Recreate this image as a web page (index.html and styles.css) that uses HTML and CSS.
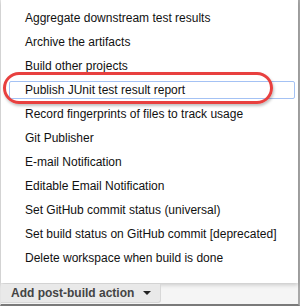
FILE: index.html
```html
<!DOCTYPE html>
<html lang="en">
<head>
    <meta charset="UTF-8">
    <title>Add post-build action</title>
    <link rel="stylesheet" href="styles.css">
</head>
<body>
    <div class="frame">
        <ul class="menu">
            <li>Aggregate downstream test results</li>
            <li>Archive the artifacts</li>
            <li>Build other projects</li>
            <li class="active">Publish JUnit test result report</li>
            <li>Record fingerprints of files to track usage</li>
            <li>Git Publisher</li>
            <li>E-mail Notification</li>
            <li>Editable Email Notification</li>
            <li>Set GitHub commit status (universal)</li>
            <li>Set build status on GitHub commit [deprecated]</li>
            <li>Delete workspace when build is done</li>
        </ul>
        <div class="bar">
            <button class="btn">Add post-build action <span class="caret"></span></button>
        </div>
        <!-- annotation drawn over the screenshot -->
        <div class="mark"></div>
    </div>
</body>
</html>
```

FILE: styles.css
```css
body {
    margin: 0;
    padding: 0;
    background-color: #fff;
    font-family: Arial, "Liberation Sans", sans-serif;
}

.frame {
    position: relative;
    width: 297px;
    height: 304px;
    border-right: 2px solid #a8a8a8;
    border-bottom: 2px solid #7a7a7a;
    border-left: 1px solid #e4e4e4;
    background-color: #f5f5f5;
}

.menu {
    list-style: none;
    margin: 0;
    padding: 9px 0 10px 0;
    background-color: #fff;
    box-shadow: 0 2px 4px rgba(0, 0, 0, 0.18);
}

.menu li {
    height: 16px;
    line-height: 16px;
    margin: 0 3px 6px 8px;
    padding-left: 15px;
    font-size: 12px;
    color: #111;
    border: 1px solid transparent;
    white-space: nowrap;
}

.menu li.active {
    border-color: #a4c2f4;
    border-radius: 2px;
    background-color: #fff;
}

.bar {
    padding-top: 1px;
}

.btn {
    font-family: Arial, "Liberation Sans", sans-serif;
    font-size: 12px;
    font-weight: bold;
    color: #444;
    height: 19px;
    width: 160px;
    padding: 0 8px 0 10px;
    border: 1px solid #d8d8d8;
    border-left: none;
    border-top: none;
    border-radius: 0 0 3px 0;
    background-color: #e9e9e9;
    display: flex;
    align-items: center;
    gap: 9px;
}

.caret {
    width: 0;
    height: 0;
    border-left: 4px solid transparent;
    border-right: 4px solid transparent;
    border-top: 4px solid #222;
}

.mark {
    position: absolute;
    left: 2px;
    top: 72px;
    width: 264px;
    height: 26px;
    border: 3px solid #e8403f;
    border-radius: 16px;
    box-shadow: 1px 2px 3px rgba(0, 0, 0, 0.25);
}
```
